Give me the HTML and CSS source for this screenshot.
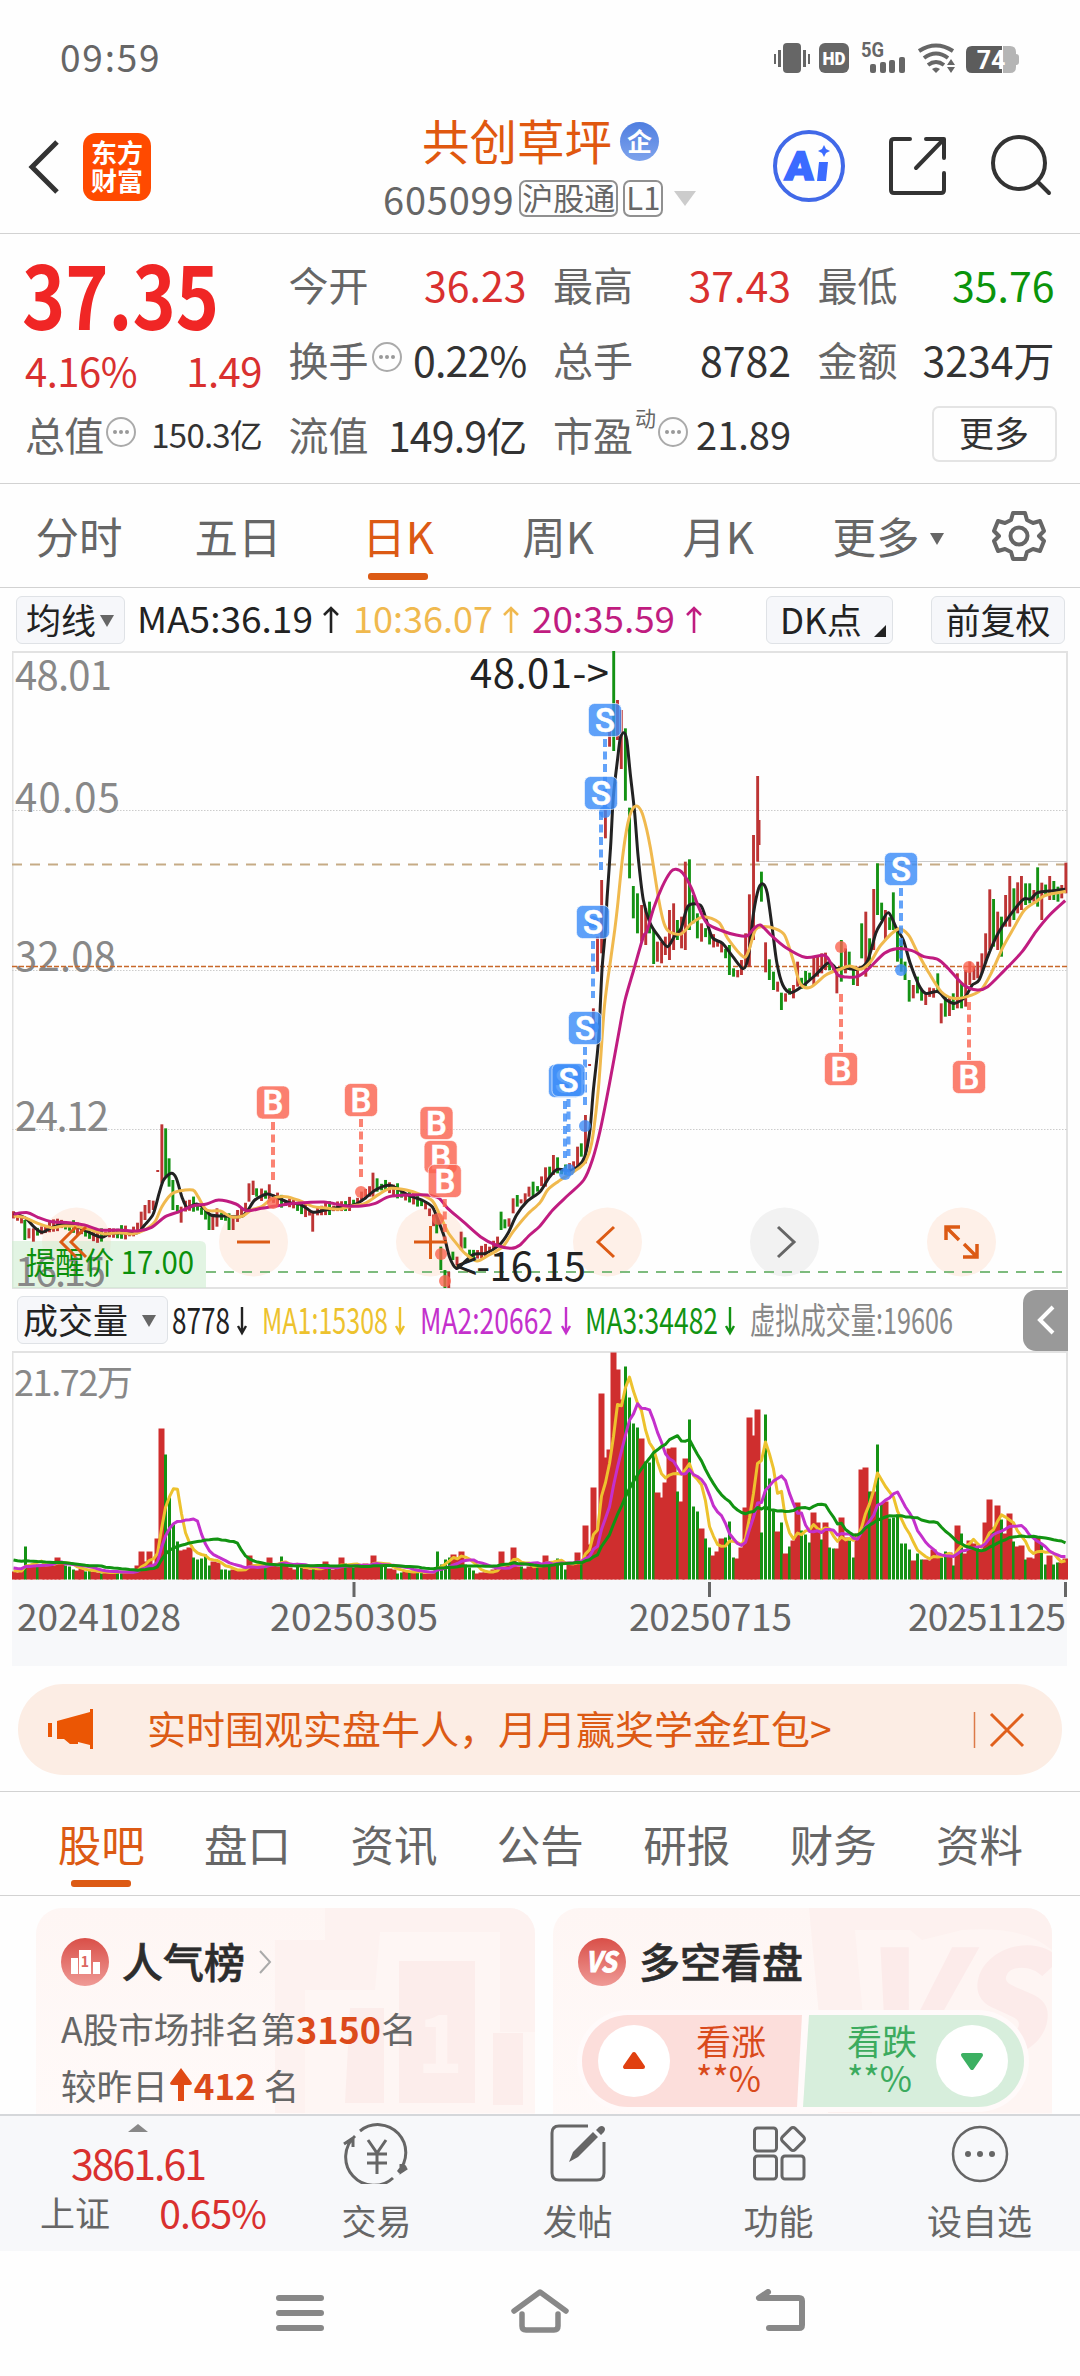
FILE: index.html
```html
<!DOCTYPE html>
<html lang="zh-CN">
<head>
<meta charset="utf-8">
<title>共创草坪 605099</title>
<link rel="stylesheet" href="styles.css">
</head>
<body>
<div class="screen">
  <div class="status">
    <span class="clock">09:59</span>
    <svg class="status-icons" width="250" height="34" viewBox="0 0 250 34">
      <g fill="#666">
        <rect x="9" y="2" width="18" height="30" rx="4"/>
        <rect x="0" y="13" width="2" height="10"/><rect x="4" y="9" width="3" height="17"/><rect x="29" y="9" width="3" height="17"/><rect x="34" y="13" width="2" height="10"/>
        <rect x="45" y="2" width="30" height="30" rx="6"/>
        <text x="87" y="16" font-size="20" font-weight="700" textLength="23" lengthAdjust="spacingAndGlyphs" class="num">5G</text>
        <rect x="96" y="23" width="6" height="9" rx="2"/><rect x="106" y="21" width="6" height="11" rx="2"/><rect x="115" y="19" width="6" height="13" rx="2"/><rect x="125" y="16" width="6" height="16" rx="2"/>
        <path d="M162 32l-4-4q4-3 8 0z"/>
        <path d="M173 24l4-6 4 6zM173 26h8l-4 6z"/>
      </g>
      <g fill="none" stroke="#666" stroke-width="4"><path d="M145 10q17-11 34 0M150 17q12-9 24 0M154 24q8-6 16 0"/></g>
      <text x="60" y="24" text-anchor="middle" font-size="19" font-weight="900" fill="#fff" textLength="23" lengthAdjust="spacingAndGlyphs" class="num">HD</text>
      <path d="M198 5h30v27h-30q-6 0-6-6V11q0-6 6-6z" fill="#5c5c5c"/>
      <path d="M229 5h7q6 0 6 6v2q3 0 3 3v5q0 3-3 3v2q0 6-6 6h-7z" fill="#b5b5b5"/>
      <text x="217" y="28" text-anchor="middle" font-size="25" font-weight="700" fill="#fff" class="num">74</text>
    </svg>
  </div>

  <header class="header">
    <div class="head-left">
      <svg width="32" height="56" viewBox="0 0 32 56"><path d="M29 3L4 28l25 25" fill="none" stroke="#333" stroke-width="5"/></svg>
      <div class="logo"><span>东方</span><span>财富</span></div>
    </div>
    <div class="head-mid">
      <div class="name-row"><span class="name">共创草坪</span><span class="ent">企</span></div>
      <div class="code-row"><span class="code">605099</span><span class="tag">沪股通</span><span class="tag">L1</span><i class="drop"></i></div>
    </div>
    <svg class="head-icons" width="284" height="76" viewBox="0 0 284 76">
      <circle cx="38" cy="38" r="34" fill="none" stroke="#4169e8" stroke-width="4"/>
      <text x="14" y="52" font-size="40" font-weight="900" fill="#3b6bff" stroke="#3b6bff" stroke-width="1.600" textLength="29" lengthAdjust="spacingAndGlyphs" class="num" transform="skewX(-4) translate(3 0)">A</text>
      <path d="M48 34h9l-2 19h-9zM53 17l2 4 4 2-4 2-2 4-2-4-4-2 4-2z" fill="#3b6bff"/>
      <g fill="none" stroke="#333" stroke-width="4" stroke-linecap="round" stroke-linejoin="round">
        <path d="M139 11h-16q-3 0-3 3v48q0 3 3 3h47q3 0 3-3V45M155 11h18v19M172 12l-27 28"/>
        <circle cx="248" cy="35" r="26"/><path d="M267 54l11 11"/>
      </g>
    </svg>
  </header>

  <section class="quote">
    <div class="q-left">
      <svg class="price" width="210" height="86" viewBox="0 0 210 86"><text x="-3" y="84" font-size="87" font-weight="700" fill="#f02625" textLength="197" lengthAdjust="spacingAndGlyphs">37.35</text></svg>
      <div class="chg red"><span>4.16%</span><span>1.49</span></div>
      <div class="cell small"><span class="lab">总值<i class="dots"></i></span><span>150.3亿</span></div>
    </div>
    <div class="q-col">
      <div class="cell"><span class="lab">今开</span><span class="red">36.23</span></div>
      <div class="cell"><span class="lab">换手<i class="dots"></i></span><span class="sq">0.22%</span></div>
      <div class="cell"><span class="lab">流值</span><span class="sq">149.9亿</span></div>
    </div>
    <div class="q-col">
      <div class="cell"><span class="lab">最高</span><span class="red">37.43</span></div>
      <div class="cell"><span class="lab">总手</span><span>8782</span></div>
      <div class="cell"><span class="lab">市盈<sup>动</sup><i class="dots pe"></i></span><span class="pev">21.89</span></div>
    </div>
    <div class="q-col">
      <div class="cell"><span class="lab">最低</span><span class="green">35.76</span></div>
      <div class="cell"><span class="lab">金额</span><span>3234万</span></div>
      <div class="cell end"><span class="more-btn">更多</span></div>
    </div>
  </section>

  <nav class="periods">
    <span>分时</span><span>五日</span><span class="on">日K</span><span>周K</span><span>月K</span><span>更多<i class="tri"></i></span>
    <svg width="54" height="54" viewBox="0 0 54 54"><g fill="none" stroke="#666" stroke-width="4" stroke-linejoin="round"><path d="M21 4h12l2 7 6 3 7-2 4 10-5 5 5 5-4 10-7-2-6 3-2 7H21l-2-7-6-3-7 2-4-10 5-5-5-5 4-10 7 2 6-3z"/><circle cx="27" cy="27" r="8.500"/></g></svg>
  </nav>

  <div class="ind">
    <span class="chip">均线<i class="tri"></i></span>
    <svg class="legend" width="600" height="48" viewBox="132 0 600 48" font-size="36">
      <text x="137" y="37" fill="#222" textLength="176" lengthAdjust="spacingAndGlyphs">MA5:36.19</text>
      <text x="353" y="37" fill="#f0b94e" textLength="140" lengthAdjust="spacingAndGlyphs">10:36.07</text>
      <text x="532" y="37" fill="#c01c80" textLength="143" lengthAdjust="spacingAndGlyphs">20:35.59</text>
      <g fill="none" stroke-width="2.600"><path stroke="#222" d="M331 37V12M324 19l7-7 7 7"/><path stroke="#f0b94e" d="M511 37V12M504 19l7-7 7 7"/><path stroke="#c01c80" d="M694 37V12M687 19l7-7 7 7"/></g>
    </svg>
    <span class="chip dk">DK点<i class="corner"></i></span>
    <span class="chip fq">前复权</span>
  </div>

  <svg class="kline" width="1056" height="638" viewBox="12 651 1056 638">
    <rect x="12.500" y="652" width="1054.500" height="636" fill="none" stroke="#e2e2e2" stroke-width="2"/>
    <g stroke="#ccc" stroke-dasharray="1.500 1.500"><path d="M12 810.500h1055M12 970.500h1055M12 1129.500h1055"/></g>
    <path d="M757 861.500h310" stroke="#ccc"/>
    <g fill="#fef0e8"><circle cx="76.500" cy="1242" r="34.500"/><circle cx="253.500" cy="1242" r="34.500"/><circle cx="430.500" cy="1242" r="34.500"/><circle cx="607.500" cy="1242" r="34.500"/><circle cx="784.500" cy="1242" r="34.500" fill="#f2f2f2"/><circle cx="961.500" cy="1242" r="34.500"/></g>
    <path d="M12 1241h188q6 0 6 6v41H12z" fill="#ceedd0" fill-opacity=".6"/>
    <g fill="#888" font-size="40">
      <text x="15" y="690" textLength="97">48.01</text><text x="15" y="812" textLength="105">40.05</text><text x="15" y="971" textLength="101">32.08</text><text x="15" y="1131" textLength="94">24.12</text><text x="15" y="1286" textLength="91">16.15</text>
    </g>
    <path d="M12 864.500h1055" stroke="#c6ab86" stroke-width="2" stroke-dasharray="10 8"/>
    <path d="M12 966.500h1055" stroke="#c8682a" stroke-width="1.500" stroke-dasharray="5 2"/>
    <path d="M206 1272h861" stroke="#7dbb7d" stroke-width="2" stroke-dasharray="10 8"/>
    <svg x="0" y="651" width="1080" height="637" viewBox="0 -837 3136 1911" preserveAspectRatio="none" id="price"></svg>
    <g id="marks"></g>
    <text x="26" y="1274" font-size="31" fill="#0b900b" textLength="168" lengthAdjust="spacingAndGlyphs">提醒价 17.00</text>
    <g fill="none" stroke="#dc5a14" stroke-width="3">
      <path d="M76 1227l-15 15 15 15M86 1227l-15 15 15 15M237 1242h33M414 1242h33M430.500 1226v33"/>
      <path d="M614 1227l-16 15 16 15"/><path d="M778 1227l16 15-16 15" stroke="#666"/>
      <path d="M946 1240v-13h14M946 1227l13 13M977 1244v13h-14M977 1257l-13-13" stroke-width="3.500"/>
    </g>
    <g fill="#222" font-size="40"><text x="470" y="688" textLength="139">48.01-&gt;</text><text x="455" y="1281" textLength="131">&lt;-16.15</text></g>
  </svg>

  <div class="ind vol-ind">
    <span class="chip vol">成交量<i class="tri"></i></span>
    <svg class="legend" width="850" height="60" viewBox="170 0 850 60" font-size="36">
      <text x="172" y="44" fill="#222" textLength="58" lengthAdjust="spacingAndGlyphs">8778</text>
      <text x="262" y="44" fill="#edc22e" textLength="126" lengthAdjust="spacingAndGlyphs">MA1:15308</text>
      <text x="420" y="44" fill="#c430cc" textLength="133" lengthAdjust="spacingAndGlyphs">MA2:20662</text>
      <text x="585" y="44" fill="#129312" textLength="133" lengthAdjust="spacingAndGlyphs">MA3:34482</text>
      <text x="750" y="44" fill="#888" textLength="203" lengthAdjust="spacingAndGlyphs">虚拟成交量:19606</text>
      <g fill="none" stroke-width="2.400"><path stroke="#222" d="M242 17v26M238 36l4 7 4-7"/><path stroke="#edc22e" d="M400 17v26M396 36l4 7 4-7"/><path stroke="#c430cc" d="M566 17v26M562 36l4 7 4-7"/><path stroke="#129312" d="M730 17v26M726 36l4 7 4-7"/></g>
    </svg>
    <span class="handle"><svg width="20" height="30" viewBox="0 0 20 30"><path d="M17 2L4 15l13 13" fill="none" stroke="#fff" stroke-width="4"/></svg></span>
  </div>

  <svg class="volume" width="1056" height="315" viewBox="12 1351 1056 315">
    <rect x="12" y="1580" width="1055" height="86" fill="#f7f8fa"/>
    <path d="M12.500 1580V1352H1067V1580" fill="none" stroke="#e2e2e2" stroke-width="2"/>
    <text x="14" y="1396" font-size="36" fill="#888" textLength="119">21.72万</text>
    <g id="vol"></g>
    <path d="M354 1582v15M709.500 1582v15M1065.500 1582v15" stroke="#666" stroke-width="3"/>
    <g fill="#666" font-size="37"><text x="17" y="1631" textLength="164">20241028</text><text x="270" y="1631" textLength="168">20250305</text><text x="629" y="1631" textLength="163">20250715</text><text x="908" y="1631" textLength="158">20251125</text></g>
  </svg>

  <div class="banner">
    <svg width="48" height="42" viewBox="0 0 48 42"><path d="M0 14h4v14H0zM9 12L42 3V0h3v40h-3v-4l-12-3v2h-8l-6-5H9z" fill="#eb5604"/></svg>
    <span class="ad">实时围观实盘牛人，月月赢奖学金红包&gt;</span>
    <svg width="52" height="40" viewBox="0 0 52 40"><path d="M1.500 2v36" stroke="#dc7a48" stroke-width="1.500"/><path d="M18 4l32 32M50 4L18 36" stroke="#e0601c" stroke-width="3"/></svg>
  </div>

  <nav class="sections"><span class="on">股吧</span><span>盘口</span><span>资讯</span><span>公告</span><span>研报</span><span>财务</span><span>资料</span></nav>

  <section class="cards">
    <article class="card">
      <svg class="mark" width="260" height="205" viewBox="0 0 260 205">
        <path d="M50 0h210v205H0V32h50z" fill="#fdf2f0"/><path d="M105 24h120v100h35v81H30V82h70z" fill="#fef6f4"/>
        <path d="M124 53h76v142h-76zM75 100h34v95H70zM218 125h30v72h-30z" fill="#fcedeb"/><text x="142" y="165" font-size="78" font-weight="700" fill="#fef4f2">1</text>
      </svg>
      <div class="card-head">
        <svg width="48" height="48" viewBox="0 0 48 48"><defs><linearGradient id="rg" x1="0" y1="0" x2="0" y2="1"><stop offset="0" stop-color="#d94f48"/><stop offset="1" stop-color="#ef9a96"/></linearGradient></defs><circle cx="24" cy="24" r="24" fill="url(#rg)"/><path d="M10 20h7v16h-7zM18 12h12v24H18zM32 24h7v12h-7z" fill="#fff"/><text x="24" y="29" text-anchor="middle" font-size="14" font-weight="700" fill="#dc6762">1</text></svg>
        <b>人气榜</b>
        <svg width="16" height="26" viewBox="0 0 16 26"><path d="M2 2l10 11L2 24" fill="none" stroke="#aaa" stroke-width="2"/></svg>
      </div>
      <p>A股市场排名第<em>3150</em>名</p>
      <p><span>较昨日</span><svg width="26" height="34" viewBox="0 0 26 34"><path d="M13 0l11 15q0 2-2 2h-6v16h-6V17H4q-2 0-2-2z" fill="#e04a14"/></svg><em class="up-n">412</em> 名</p>
    </article>
    <article class="card">
      <svg class="mark" width="260" height="205" viewBox="0 0 260 205">
        <path d="M17 0h243v205H36z" fill="#fdf1ef"/><path d="M63 22h55l12 10 40-10q60-5 90 20v163H80z" fill="#fef5f3"/>
        <text x="62" y="148" font-size="146" font-weight="900" font-style="italic" fill="#fcebea" textLength="190" lengthAdjust="spacingAndGlyphs">VS</text>
      </svg>
      <div class="card-head">
        <svg width="48" height="48" viewBox="0 0 48 48"><circle cx="24" cy="24" r="24" fill="url(#rg)"/><text x="23" y="34" text-anchor="middle" font-size="28" font-weight="700" font-style="italic" fill="#fff" stroke="#fff" textLength="31" lengthAdjust="spacingAndGlyphs">VS</text></svg>
        <b>多空看盘</b>
      </div>
      <div class="vote">
        <svg class="vote-bg" width="452" height="102" viewBox="0 0 452 102"><rect width="452" height="102" rx="51" fill="#fffafa"/><path d="M51 5h174l-5 92H51a46 46 0 010-92z" fill="#fcdedb"/><path d="M232 5h169a46 46 0 010 92H226z" fill="#d7eedc"/></svg>
        <span class="knob"><svg width="24" height="20" viewBox="0 0 24 20"><path d="M12 3L3 16h18z" fill="#e04010" stroke="#e04010" stroke-width="4" stroke-linejoin="round"/></svg></span>
        <span class="side up">看涨<br>**%</span>
        <span class="side down">看跌<br>**%</span>
        <span class="knob"><svg width="24" height="20" viewBox="0 0 24 20"><path d="M12 17L3 4h18z" fill="#3cb062" stroke="#3cb062" stroke-width="4" stroke-linejoin="round"/></svg></span>
      </div>
    </article>
  </section>

  <footer class="bottom">
    <div class="index"><i class="caret"></i><span class="red pts">3861.61</span><div class="idx-row"><span>上证</span><span class="red">0.65%</span></div></div>
    <div class="act"><svg width="68" height="62" viewBox="0 0 68 62"><g fill="none" stroke="#666" stroke-width="3"><path d="M17 9A28 28 0 0155 50M50 56A28 28 0 0112 14M1 22l9-6v9M55 50l8-6M58 42v8l6-4M25 18l9 13 9-13M24 32h20M24 41h20M34 31v21"/></g></svg><span>交易</span></div>
    <div class="act"><svg width="68" height="62" viewBox="0 0 68 62"><path d="M44 4H15q-7 0-7 7v40q0 7 7 7h38q7 0 7-7V20" fill="none" stroke="#666" stroke-width="3"/><path d="M25 40l4-10 20-20 5 5-20 20zM52 8l3-3q3-2 5 0t0 5l-3 3z" fill="#666"/></svg><span>发帖</span></div>
    <div class="act"><svg width="68" height="62" viewBox="0 0 68 62"><g fill="none" stroke="#666" stroke-width="3"><rect x="9.500" y="6" width="22" height="23" rx="3"/><rect x="9.500" y="34" width="22" height="23" rx="3"/><rect x="37" y="34" width="22" height="23" rx="3"/><rect x="39" y="8" width="18" height="18" rx="3" transform="rotate(45 48 17)"/></g></svg><span>功能</span></div>
    <div class="act"><svg width="68" height="62" viewBox="0 0 68 62"><circle cx="34" cy="32" r="27" fill="none" stroke="#666" stroke-width="2.500"/><g fill="#666"><circle cx="22" cy="32" r="3"/><circle cx="34" cy="32" r="3"/><circle cx="46" cy="32" r="3"/></g></svg><span>设自选</span></div>
  </footer>

  <div class="sysnav">
    <svg width="60" height="50" viewBox="0 0 60 50"><path d="M9 9h42M9 24h42M9 39h42" stroke="#888" stroke-width="6" stroke-linecap="round"/></svg>
    <svg width="60" height="50" viewBox="0 0 60 50"><path d="M4 22L30 3l26 19M12 25v12q0 4 4 4h28q4 0 4-4V25" fill="none" stroke="#888" stroke-width="5.500" stroke-linecap="round" stroke-linejoin="round"/></svg>
    <svg width="60" height="50" viewBox="0 0 60 50"><path d="M18 3L9 9h40q3 0 3 3v24q0 3-3 3H19" fill="none" stroke="#888" stroke-width="6" stroke-linecap="round" stroke-linejoin="round"/></svg>
  </div>
</div>
<script src="chart.js"></script>
</body>
</html>
```

FILE: styles.css
```css
* { box-sizing: border-box; }
body { margin: 0; background: #fff; color: #333; font-family: "Noto Sans CJK SC", "Noto Sans", sans-serif; }
i, em { font-style: normal; }
svg { display: block; flex: none; }
.num { font-family: Roboto, sans-serif; }
.screen { width: 1080px; height: 2376px; display: flex; flex-direction: column; overflow: hidden; background: #fefefe; }
.red { color: #d9302f; }
.green { color: #0b940b; }

.status { height: 100px; padding: 16px 56px 0 60px; display: flex; justify-content: space-between; align-items: center; flex: none; }
.clock { font-size: 37px; letter-spacing: 1.8px; color: #666; line-height: 40px; padding-bottom: 4px; }

.header { height: 134px; flex: none; display: grid; grid-template-columns: 383px 1fr 284px; border-bottom: 1px solid #d2d2d2; padding-right: 25px; }
.head-left { display: flex; align-items: center; gap: 23px; padding-left: 28px; }
.logo { width: 68px; height: 68px; border-radius: 13px; background: #ff4a00; color: #fff; font-size: 26px; font-weight: 700; line-height: 28px; display: flex; flex-direction: column; align-items: center; justify-content: center; padding-bottom: 1px; }
.head-mid { padding-top: 9px; }
.name-row { display: flex; align-items: center; gap: 8px; padding-left: 39px; height: 62px; }
.name { font-size: 47.500px; color: #e0580f; line-height: 62px; }
.ent { width: 39px; height: 39px; border-radius: 50%; background: linear-gradient(#4f7ee0, #7ea3ec); color: #fff; font-size: 25px; font-weight: 700; line-height: 37px; text-align: center; margin-top: 2px; }
.code-row { display: flex; align-items: center; gap: 5px; height: 54px; color: #666; }
.code { font-size: 38px; letter-spacing: .8px; }
.tag { border: 2px solid #909090; border-radius: 7px; height: 37px; font-size: 31px; line-height: 30px; padding: 0 1px; }
.drop { border: 11px solid transparent; border-top: 15px solid #ccc; border-bottom: 0; margin-left: 6px; }
.head-icons { margin-top: 28px; }

.quote { height: 250px; flex: none; display: grid; grid-template-columns: 237px 238px 238px 237px; column-gap: 26.500px; padding: 12px 0 0 25px; border-bottom: 1px solid #d2d2d2; }
.q-col { display: grid; grid-template-rows: 75px 75px 75px; }
.cell { display: flex; justify-content: space-between; align-items: center; font-size: 41px; white-space: nowrap; line-height: 60px; }
.lab { font-size: 40px; color: #666; display: flex; align-items: center; }
.sq { letter-spacing: -.8px; }
.dots { width: 30px; height: 30px; border: 2px solid #aaa; border-radius: 50%; margin: -4px 0 0 3px; display: flex; justify-content: center; align-items: center; }
.dots::after { content: ""; width: 4px; height: 4px; border-radius: 50%; background: #999; box-shadow: -6px 0 #999, 6px 0 #999; }
.lab sup { font-size: 21px; line-height: 24px; margin-top: -34px; margin-left: 2px; }
.dots.pe { margin-left: 2px; }
.pev { font-size: 38px; }
.price { overflow: visible; }
.chg { display: flex; justify-content: space-between; height: 64px; line-height: 76px; font-size: 40px; letter-spacing: -.5px; }
.small { height: 75px; font-size: 33px; letter-spacing: -.8px; }
.end { justify-content: flex-end; }
.more-btn { width: 125px; height: 56px; border: 2px solid #e4e4e4; border-radius: 7px; font-size: 35px; line-height: 48px; text-align: center; margin: 0 -2px 0 0; }

.periods { height: 104px; flex: none; display: grid; grid-template-columns: 158px repeat(5, 160px) 1fr; align-items: center; border-bottom: 1px solid #d2d2d2; font-size: 43.500px; color: #666; line-height: 103px; }
.periods span { text-align: center; position: relative; height: 104px; }
.periods svg { margin-left: 34px; }
.periods span:last-of-type { left: 2px; }
.on { color: #dc5a14; }
.periods .on::after, .sections .on::after { content: ""; position: absolute; left: 50%; margin-left: -30px; bottom: 8px; width: 60px; height: 7px; border-radius: 3px; background: #dc5a14; }
.tri { display: inline-block; border: 7px solid transparent; border-top: 12px solid #666; border-bottom: 0; vertical-align: 9px; }
.periods .tri { margin-left: 10px; margin-right: -16px; }

.ind { height: 63px; flex: none; display: flex; align-items: center; padding: 0 15px 0 16px; }
.chip { height: 48px; border: 1.500px solid #dfe2e6; border-radius: 6px; background: #f6f7fa; color: #222; font-size: 35px; line-height: 43px; white-space: nowrap; position: relative; flex: none; }
.ind > .chip:first-child { width: 109px; padding-left: 9px; }
.ind .chip .tri { margin-left: 4px; vertical-align: 7px; }
.legend { margin-left: 7px; }
.dk { width: 127px; padding-left: 13px; margin-left: 34px; }
.corner { position: absolute; right: 6px; bottom: 6px; border-left: 12px solid transparent; border-bottom: 12px solid #222; }
.fq { width: 134px; text-align: center; margin-left: 38px; }
.kline { margin-left: 12px; }
.vol-ind { height: 62px; padding: 0 12px 0 17px; }
.ind.vol-ind > .chip:first-child { width: 151px; padding-left: 5px; }
.ind .vol .tri { margin-left: 14px; }
.vol-ind .legend { margin-left: 2px; }
.handle { width: 45px; height: 61px; margin-left: 3px; flex: none; background: #999; border-radius: 13px 0 0 13px; display: flex; align-items: center; justify-content: center; }
.volume { margin-left: 12px; }

.banner { height: 91px; flex: none; margin: 18px 18px 16px; border-radius: 46px; background: #fcede4; display: flex; align-items: center; padding: 0 37px 0 30px; color: #dc5a14; }
.ad { font-size: 39px; margin-left: 51px; flex: 1; white-space: nowrap; padding-bottom: 5px; }

.sections { height: 105px; flex: none; display: grid; grid-template-columns: repeat(7, 146.400px); padding-left: 28px; border-top: 1px solid #d2d2d2; border-bottom: 1px solid #d2d2d2; font-size: 43.500px; line-height: 103px; color: #666; }
.sections span { text-align: center; position: relative; }
.cards { height: 218px; flex: none; display: grid; grid-template-columns: 499px 499px; gap: 18px; padding: 12px 36px 0; overflow: hidden; }
.card { height: 240px; border-radius: 26px; background: linear-gradient(#fef6f4, #fffaf9); padding: 30px 25px; position: relative; overflow: hidden; }
.card > * { position: relative; }
.card .mark { position: absolute; right: 0; top: 0; }
.card-head { display: flex; align-items: center; gap: 13px; height: 48px; font-size: 41px; line-height: 48px; color: #2d2d2d; }
.card-head b { font-weight: 500; -webkit-text-stroke: .6px #2d2d2d; margin-top: -5px; }
.card p { margin: 0; height: 57px; display: flex; align-items: center; font-size: 35.600px; color: #666; white-space: pre; }
.card-head + p { margin-top: 13px; }
.card em { color: #dc4a1a; font-weight: 700; font-size: 36px; }
.card .up-n { font-size: 35px; }
.vote { width: 452px; height: 102px; margin: 24px 0 0 -1px; display: flex; align-items: center; padding: 0 16px 0 21px; }
.vote-bg { position: absolute; left: 0; top: 0; }
.knob { width: 72px; height: 72px; border-radius: 50%; background: #fff; display: flex; align-items: center; justify-content: center; position: relative; flex: none; }
.side { position: relative; font-size: 35px; line-height: 37px; flex: none; width: 70px; margin-top: -6px; }
.up { color: #d94a1c; margin-left: 26px; margin-right: 81px; }
.down { color: #3cab5e; margin-right: 19px; }

.bottom { height: 137px; flex: none; border-top: 2px solid #d5d7da; background: #f7f8fa; display: grid; grid-template-columns: 276px repeat(4, 201px); color: #666; font-size: 35px; }
.index { display: flex; flex-direction: column; align-items: center; padding-top: 8px; }
.caret { border: 10px solid transparent; border-bottom: 8px solid #888; border-top: 0; }
.pts { font-size: 41px; line-height: 48px; letter-spacing: -2px; margin-top: 6px; }
.idx-row { width: 226px; margin-left: 30px; display: flex; justify-content: space-between; line-height: 50px; margin-top: 1px; }
.idx-row .red { font-size: 39px; letter-spacing: -1px; }
.act { display: flex; flex-direction: column; align-items: center; padding-top: 6px; }
.act span { line-height: 50px; margin-top: 11px; }
.sysnav { flex: none; height: 126px; display: flex; justify-content: center; gap: 180px; padding-top: 38px; }
```

FILE: chart.js
```js
const NS = 'http://www.w3.org/2000/svg';
const add = (parent, tag, attrs, text) => {
  const el = document.createElementNS(NS, tag);
  for (const k in attrs) el.setAttribute(k, attrs[k]);
  if (text) el.textContent = text;
  parent.appendChild(el);
};
const RED = '#cf2e2e', GREEN = '#149214';

// Daily volume; a negative value marks a falling day.
const volume = [
  8,7,9,-33,14,15,-15,15,14,16,15,22,17,-14,-13,-10,9,11,-8,-9,8,7,-6,7,7,8,-8,-8,7,7,8,14,28,18,28,15,41,
  151,-125,-82,-55,-38,29,30,32,-22,-20,-21,-25,-14,18,17,-10,-10,-9,10,9,10,11,24,15,12,14,-13,22,14,13,-23,16,12,10,-15,-12,
  11,10,-11,10,12,18,-11,10,12,22,-16,14,-12,13,14,16,13,24,15,-13,-14,11,10,-6,-7,9,-8,8,-7,-7,6,7,8,-28,-15,-20,-22,25,22,28,-15,-12,-9,
  6,7,7,8,10,12,28,14,14,32,13,-13,11,13,14,-16,14,
  24,-17,17,-21,-17,-10,15,15,27,-17,54,35,92,50,186,122,130,227,210,180,-213,-182,-156,-152,141,-118,-117,-125,87,82,97,131,132,-88,78,
  121,-160,-73,-68,51,-41,-32,24,28,41,-42,-58,-22,21,32,72,162,144,170,-47,-165,-101,-70,48,-57,26,-33,39,77,-49,-45,-37,67,57,-40,57,
  -32,-31,31,62,42,-39,-22,46,110,112,-88,88,-135,-76,78,-61,-62,-65,-36,-36,-30,19,-26,-20,20,19,30,24,-22,-28,27,-14,54,-46,26,39,36,
  -32,28,57,80,-52,74,-60,46,66,-38,33,34,-20,22,21,42,-36,-15,24,-15,-17,17,21
];
const xOf = i => 13.5 + 4 * i;

const vol = document.getElementById('vol');
const BASE = 1579.5;
volume.forEach((v, i) => {
  const h = Math.abs(v), w = v > 0 ? 6 : 3;
  add(vol, 'rect', { x: xOf(i) - w / 2, y: BASE - h, width: w, height: h, fill: v > 0 ? RED : GREEN });
});
[[5, '#edc22e', 9], [10, '#c430cc', 12], [20, '#129312', 20]].forEach(([n, color, before]) => {
  const pts = volume.map((_, i) => {
    let sum = 0;
    for (let k = i - n + 1; k <= i; k++) sum += k < 0 ? before : Math.abs(volume[k]);
    return xOf(i) + ',' + (BASE - sum / n).toFixed(1);
  });
  add(vol, 'polyline', { points: pts.join(' '), fill: 'none', stroke: color, 'stroke-width': 3, 'stroke-linejoin': 'round' });
});

// Moving averages of the price, in the units of the price viewBox.
const ma5 = '40,850 75,865 98,890 122,907 150,893 185,882 220,888 255,905 295,922 320,910 370,908 400,908 420,885 445,852 462,790 475,750 497,730 512,745 528,800 543,832 570,822 590,832 612,855 650,858 700,860 720,840 740,810 775,792 800,800 840,818 870,822 890,835 910,847 945,840 985,832 1030,824 1060,805 1090,780 1130,766 1160,780 1190,798 1225,810 1255,830 1270,865 1290,920 1305,980 1325,1015 1345,1000 1375,973 1410,970 1450,945 1475,910 1500,855 1530,815 1568,785 1593,745 1618,718 1653,722 1678,710 1698,680 1713,600 1723,480 1738,330 1748,120 1758,0 1763,-100 1773,-250 1781,-400 1793,-510 1801,-575 1811,-592 1820,-570 1830,-470 1843,-350 1853,-220 1868,-90 1888,-20 1913,20 1938,50 1958,20 1978,-5 1998,-72 2033,-75 2048,-40 2068,22 2098,40 2128,80 2158,116 2173,80 2188,-50 2203,-125 2216,-138 2228,-110 2243,0 2256,100 2273,165 2296,188 2328,170 2368,135 2406,98 2428,115 2458,114 2488,118 2518,95 2543,10 2558,-20 2580,-52 2603,-5 2623,30 2643,100 2668,165 2688,190 2723,185 2748,210 2773,220 2803,200 2823,165 2843,150 2868,80 2893,20 2913,-15 2948,-65 2973,-93 2993,-93 3013,-112 3058,-118 3093,-122';
const ma10 = '40,858 70,862 110,880 150,893 185,888 225,890 265,900 305,912 345,908 385,912 420,900 450,875 470,830 497,793 520,783 560,780 575,800 600,840 640,843 670,860 705,858 730,840 760,830 790,806 830,800 870,812 910,830 940,833 985,838 1020,828 1060,820 1100,793 1135,775 1180,780 1220,793 1255,812 1275,850 1300,905 1325,940 1350,970 1385,993 1420,975 1460,950 1490,905 1530,855 1568,818 1590,780 1620,755 1650,735 1680,715 1700,695 1718,640 1738,470 1755,230 1773,90 1785,0 1793,-70 1808,-220 1823,-320 1838,-365 1853,-370 1868,-340 1888,-250 1913,-90 1928,-20 1943,5 1978,12 2008,-20 2043,-40 2088,-22 2113,25 2158,80 2173,65 2193,0 2213,-10 2248,-5 2278,15 2303,90 2323,160 2353,172 2398,135 2438,118 2468,108 2498,118 2528,95 2558,45 2608,-3 2638,15 2663,65 2698,130 2733,185 2768,205 2808,200 2848,180 2878,130 2913,50 2943,-5 2973,-58 3008,-85 3038,-105 3095,-116';
const ma20 = '40,852 80,848 110,862 150,875 200,878 245,885 290,900 345,900 400,903 440,892 480,860 520,845 560,828 600,822 635,810 685,822 715,842 760,835 800,828 860,820 940,816 1000,827 1050,828 1090,820 1130,800 1190,795 1240,795 1275,805 1300,835 1345,875 1395,920 1440,945 1485,955 1510,945 1535,918 1568,888 1605,840 1650,795 1695,750 1720,690 1743,600 1770,460 1800,290 1815,210 1840,120 1868,20 1878,5 1898,-65 1923,-130 1948,-175 1963,-182 1983,-170 2008,-125 2028,-70 2053,-20 2098,3 2138,15 2168,18 2188,-3 2208,-15 2238,15 2278,50 2338,82 2393,76 2413,100 2433,135 2458,141 2488,140 2518,120 2568,70 2603,56 2648,62 2683,80 2723,88 2753,115 2798,165 2838,180 2868,170 2913,125 2968,65 3008,5 3048,-45 3093,-88';
const parse = s => s.split(' ').map(p => p.split(',').map(Number));
const at = (pts, x) => {
  for (let k = 1; k < pts.length; k++) {
    const [x0, y0] = pts[k - 1], [x1, y1] = pts[k];
    if (x <= x1) return y0 + (y1 - y0) * (x - x0) / (x1 - x0);
  }
  return pts[pts.length - 1][1];
};
const curve = pts => {
  let d = `M${pts[0]}`;
  for (let k = 0; k < pts.length - 1; k++) {
    const a = pts[Math.max(k - 1, 0)], b = pts[k], c = pts[k + 1], e = pts[Math.min(k + 2, pts.length - 1)];
    d += `C${b[0] + (c[0] - a[0]) / 7},${b[1] + (c[1] - a[1]) / 7} ${c[0] - (e[0] - b[0]) / 7},${c[1] - (e[1] - b[1]) / 7} ${c[0]},${c[1]}`;
  }
  return d;
};

// Days with a wide range: x, high, low, and g/r where the colour is not that of the volume bar.
const wide = `72,870,930 84,895,925 97,895,935 410,845,895 421,825,870 433,810,850 445,812,840 458,720,726 470,583,760 481,595,740 491,685,770 502,750,840 515,825,850 526,830,878 607,850,900 618,860,900 630,835,890 665,850,900 677,860,900 723,760,815 735,752,795 745,775,800,g 782,763,810 908,845,905,r 1083,728,800 1095,745,785,g 1268,860,910,g 1280,950,1020,g 1292,1020,1075,g 1303,1025,1075,r 1315,965,990,g 1327,980,1005,r 1339,905,960,r 1350,922,955,g 1455,845,900,g 1466,868,895,g 1478,865,890,r 1490,805,850,r 1502,795,830,g 1513,808,820,r 1525,790,820 1536,770,800 1548,755,800,g
1584,712,770 1596,710,740 1607,675,735,r 1619,682,730,g 1677,650,710 1688,640,680 1700,555,700 1712,402,408 1723,235,330 1735,20,125 1747,-150,70 1758,-360,-275 1770,-600,-550 1782,-838,-537,g 1793,-690,-570 1804,-660,-483 1816,-605,-388 1828,-367,-155 1839,-132,-35 1851,-110,10 1863,-75,35 1875,-65,45,r 1886,-85,10 1898,0,102 1909,35,95 1921,35,100 1932,20,75 1944,-60,90 1956,-80,60 1967,-30,30 1979,-40,55 1990,-205,60 2002,-212,0 2013,-105,-20 2025,-50,25 2037,-20,35
2118,45,135 2130,115,140 2142,120,142 2153,90,135 2165,10,110 2176,-107,110 2188,-285,30 2200,-462,-205 2204,-330,-255,r 2211,-175,-85 2223,37,127,r 2234,88,150 2246,125,180 2258,155,185 2269,188,240 2281,190,215 2304,165,205 2316,95,170 2363,80,165 2374,75,140 2386,70,130,r 2397,68,120 2430,115,190,r 2443,30,155,g 2455,55,130 2466,65,120 2478,120,165 2490,110,168 2502,-20,85,g 2514,-55,140 2525,25,110 2537,-123,60 2548,-200,-45,g 2560,-82,-30,g 2571,-60,30 2594,-113,0 2606,0,95 2617,30,125,g 2628,95,150 2640,150,215 2652,165,205,r 2664,140,190 2676,180,212 2688,190,225 2723,130,185,g 2733,220,280,r 2745,200,260 2757,200,258 2768,190,240 2780,130,235 2792,160,235 2804,120,230 2816,95,165 2828,110,150 2839,95,145,r 2851,70,130 2862,10,100 2874,-122,60 2885,-93,50 2897,-55,60 2908,-40,80 2920,-105,-10 2932,-162,-10 2944,-125,-30 2955,-143,-50 2966,-162,-60 2978,-140,-75 2990,-140,-80,g 3002,-120,-85 3013,-188,-70,g 3025,-142,-30,r 3048,-162,-90 3060,-147,-90 3072,-130,-85 3083,-135,-95 3095,-202,-110`
  .split(/\s+/).map(s => s.split(','));

const price = document.getElementById('price');
const UX = 2.904;
const average = parse(ma5);
const taken = new Set();
const candle = (x, hi, lo, up) => add(price, 'rect', { x: x - 4.2, y: hi, width: 8.4, height: lo - hi, fill: up ? '#bd3434' : GREEN });
wide.forEach(([x, hi, lo, c]) => {
  const i = Math.round((x / UX - 13.5) / 4);
  taken.add(i);
  candle(+x, +hi, +lo, c ? c === 'r' : volume[i] > 0);
});
volume.forEach((v, i) => {
  if (taken.has(i)) return;
  const x = xOf(i) * UX;
  if (x > 1690 && x < 1830) return;
  const mid = at(average, x + 14), wave = (i * 37 % 17) / 17;
  const reach = 12 + wave * 14;
  candle(x, mid - reach + (i % 3) * 4, mid + reach * .8, v > 0);
});
[[average, '#222'], [parse(ma10), '#f0b94e'], [parse(ma20), '#c01c80']].forEach(([pts, color]) =>
  add(price, 'path', { d: curve(pts), fill: 'none', stroke: color, 'stroke-width': 3, 'vector-effect': 'non-scaling-stroke', 'stroke-linejoin': 'round' }));

// Trades: letter, badge x and y, dash start and end, dot x and y.
const marks = document.getElementById('marks');
[
  ['B', 273, 1102.5, 1122, 1181, 273, 1203], ['B', 361, 1100, 1119, 1178, 361, 1192],
  ['B', 436.5, 1123, 0, 0, 438, 1219], ['B', 440.6, 1157, 0, 0, 441, 1254], ['B', 444.8, 1181, 1199, 1240, 445, 1281],
  ['B', 841, 1069, 994, 1052, 841, 947], ['B', 969, 1077, 1002, 1060, 969, 967],
  ['S', 605, 720, 739, 810, 605, 812], ['S', 601, 793, 812, 870, 593, 922], ['S', 593, 922, 941, 998, 593, 1027],
  ['S', 585, 1028, 1047, 1105, 585, 1126], ['S', 565, 1081, 1101, 1158, 565, 1174], ['S', 568.5, 1080, 1099, 1156, 569, 1170],
  ['S', 901, 869, 888, 962, 901, 970]
].forEach(([t, x, y, s0, s1, dx, dy]) => {
  const fill = t === 'B' ? '#fa6450' : '#3c8cf8';
  if (s0) add(marks, 'path', { d: `M${x} ${s0}V${s1}`, stroke: fill, 'stroke-opacity': .8, 'stroke-width': 4, 'stroke-dasharray': '8 4.500' });
  add(marks, 'circle', { cx: dx, cy: dy, r: 6, fill, 'fill-opacity': .8 });
  add(marks, 'rect', { x: x - 16.5, y: y - 16.5, width: 33, height: 33, rx: 6, fill, 'fill-opacity': .82, stroke: '#fff', 'stroke-width': 1, 'stroke-opacity': .6 });
  add(marks, 'text', { x, y: y + 11.5, 'text-anchor': 'middle', 'font-size': 33, 'font-weight': 500, 'font-family': 'Roboto, sans-serif', fill: '#fff', stroke: '#fff', 'stroke-width': .6 }, t);
});
```
